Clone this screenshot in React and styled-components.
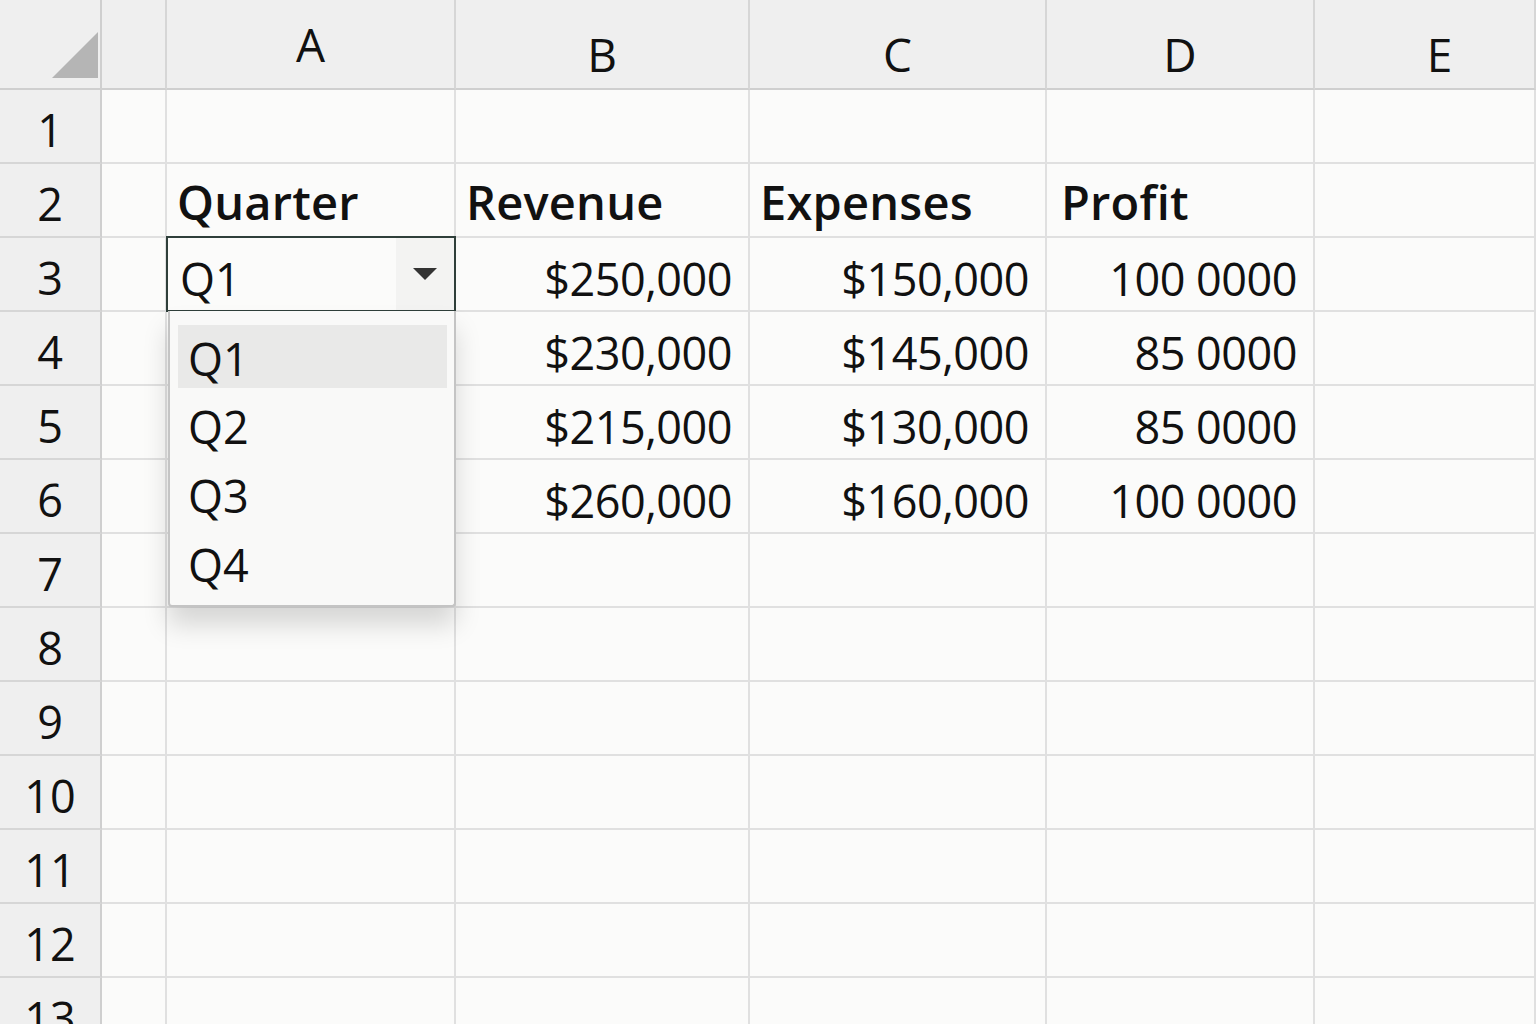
import React from "react";
import styled, { createGlobalStyle } from "styled-components";

const Global = createGlobalStyle`
  html, body { margin: 0; padding: 0; background: #fbfbfa; overflow: hidden; }
  body { font-family: "Open Sans", "Noto Sans", sans-serif; color: #111; }
`;

const cols = [102, 65, 289, 294, 297, 268, 221];
const Sheet = styled.div`
  position: relative;
  display: grid;
  grid-template-columns: ${cols.map((c) => c + "px").join(" ")};
  grid-template-rows: 90px repeat(13, 74px);
  width: 1536px;
  height: 1024px;
  overflow: hidden;
`;
const Corner = styled.div`
  background: #efefef;
  border-right: 2px solid #cfcfcf;
  border-bottom: 2px solid #cfcfcf;
  position: relative;
`;
const ColHead = styled.div`
  background: #efefef;
  border-right: 2px solid #d6d6d6;
  border-bottom: 2px solid #cfcfcf;
  display: flex;
  align-items: center;
  justify-content: center;
  font-size: 46px;
  padding: 20px 0 0 ${(p) => p.$shift || 0}px;
  box-sizing: border-box;
`;
const RowHead = styled.div`
  background: #efefef;
  border-right: 2px solid #cfcfcf;
  border-bottom: 2px solid #d6d6d6;
  display: flex;
  align-items: center;
  justify-content: center;
  font-size: 45px;
  padding-top: 6px;
  box-sizing: border-box;
`;
const Cell = styled.div`
  border-right: 2px solid #e0e0e0;
  border-bottom: 2px solid #e0e0e0;
  display: flex;
  align-items: center;
  justify-content: ${(p) => (p.$right ? "flex-end" : "flex-start")};
  padding: ${(p) => (p.$bold ? 4 : 8)}px ${(p) => (p.$right ? "16px" : "0")} 0 ${(p) => (p.$right ? "0" : "10px")};
  font-size: ${(p) => (p.$bold ? 47 : 45)}px;
  font-weight: ${(p) => (p.$bold ? 600 : 400)};
  box-sizing: border-box;
  white-space: nowrap;
  letter-spacing: ${(p) => (p.$bold ? "0.2px" : "-0.5px")};
`;
const SelCell = styled.div`
  border: 2px solid #2f3f3a;
  margin: -2px 0 0 -1px;
  display: flex;
  align-items: center;
  font-size: 45px;
  box-sizing: border-box;
  position: relative;
  z-index: 2;
  background: #fbfbfa;
`;
const SelText = styled.span`
  flex: 1;
  padding: 8px 0 0 12px;
`;
const Arrow = styled.div`
  width: 58px;
  align-self: stretch;
  background: #f3f3f2;
  display: flex;
  align-items: center;
  justify-content: center;
`;
const Menu = styled.div`
  position: absolute;
  left: 168px;
  top: 311px;
  width: 288px;
  height: 296px;
  box-sizing: border-box;
  background: #f9f9f8;
  border: 2px solid #c4c4c4;
  border-top: none;
  border-radius: 0 0 4px 4px;
  box-shadow: 0 18px 26px rgba(0, 0, 0, 0.15);
  padding: 14px 7px 0 8px;
  z-index: 3;
`;
const Item = styled.div`
  height: ${(p) => (p.$active ? 63 : 69)}px;
  margin-bottom: ${(p) => (p.$active ? 2 : 0)}px;
  background: ${(p) => (p.$active ? "#e9e9e8" : "transparent")};
  display: flex;
  align-items: center;
  padding: 4px 0 0 10px;
  box-sizing: border-box;
  font-size: 45px;
`;

const data = [
  ["$250,000", "$150,000", "100 0000"],
  ["$230,000", "$145,000", "85 0000"],
  ["$215,000", "$130,000", "85 0000"],
  ["$260,000", "$160,000", "100 0000"],
];

export default function App() {
  const rows = [];
  for (let r = 1; r <= 13; r++) {
    rows.push(<RowHead key={"h" + r}>{r}</RowHead>);
    rows.push(<Cell key={"e" + r} />);
    if (r === 2) {
      rows.push(<Cell key="a2" $bold>Quarter</Cell>);
      rows.push(<Cell key="b2" $bold>Revenue</Cell>);
      rows.push(<Cell key="c2" $bold>Expenses</Cell>);
      rows.push(<Cell key="d2" $bold style={{ paddingLeft: 14 }}>Profit</Cell>);
    } else if (r >= 3 && r <= 6) {
      const d = data[r - 3];
      if (r === 3) {
        rows.push(
          <SelCell key="a3">
            <SelText>Q1</SelText>
            <Arrow>
              <svg width="26" height="14" viewBox="0 0 26 14"><path d="M1 1h24L13 13z" fill="#333" /></svg>
            </Arrow>
          </SelCell>
        );
      } else rows.push(<Cell key={"a" + r} />);
      rows.push(<Cell key={"b" + r} $right>{d[0]}</Cell>);
      rows.push(<Cell key={"c" + r} $right>{d[1]}</Cell>);
      rows.push(<Cell key={"d" + r} $right>{d[2]}</Cell>);
    } else {
      ["a", "b", "c", "d"].forEach((k) => rows.push(<Cell key={k + r} />));
    }
    rows.push(<Cell key={"f" + r} />);
  }
  return (
    <>
      <Global />
      <Sheet>
        <Corner>
          <svg width="48" height="48" viewBox="0 0 48 48" style={{ position: "absolute", right: 0, bottom: 8 }}>
            <path d="M46 0V46H0z" fill="#b5b5b5" />
          </svg>
        </Corner>
        <ColHead />
        <ColHead $shift={-10}>A</ColHead>
        <ColHead>B</ColHead>
        <ColHead>C</ColHead>
        <ColHead>D</ColHead>
        <ColHead $shift={30}>E</ColHead>
        {rows}
        <Menu>
          <Item $active>Q1</Item>
          <Item>Q2</Item>
          <Item>Q3</Item>
          <Item>Q4</Item>
        </Menu>
      </Sheet>
    </>
  );
}
